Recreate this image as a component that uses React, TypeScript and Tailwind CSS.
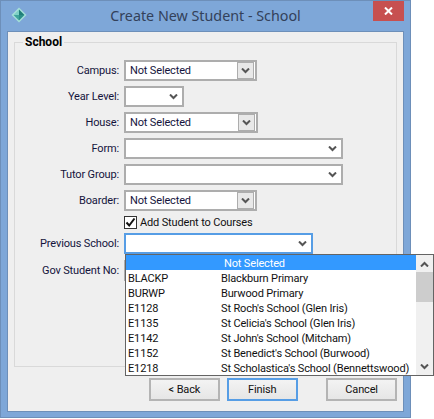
import React from "react";

const ui = "font-['Roboto',Arial,sans-serif]";

function Chevron({ className = "" }: { className?: string }) {
  return (
    <svg width="9" height="6" viewBox="0 0 9 6" className={className}>
      <path d="M1 0.5L4.5 4L8 0.5" fill="none" stroke="#555" strokeWidth="2" />
    </svg>
  );
}

function Row({ label, children }: { label: string; children?: React.ReactNode }) {
  return (
    <div className="flex h-[21px] items-center">
      <label className="w-[105px] pr-[5px] pt-[2px] text-right">{label}</label>
      {children}
    </div>
  );
}

// read-only combo with the raised square button
function SelectBox({ value, width }: { value: string; width: string }) {
  return (
    <div className={`flex h-[21px] items-center justify-between border-2 border-[#adadad] bg-white pl-[4px] ${width}`}>
      <span className="pt-[2px]">{value}</span>
      <span className="mr-px flex h-[17px] w-[17px] items-center justify-center border border-[#adadad] bg-[#e8e8e8]">
        <Chevron />
      </span>
    </div>
  );
}

// editable combo, flat arrow
function ComboBox({ width, focused }: { width: string; focused?: boolean }) {
  return (
    <div className={`flex h-[21px] items-center justify-end border-2 bg-white pr-[4px] ${width} ${focused ? "border-[#569de5]" : "border-[#adadad]"}`}>
      <Chevron />
    </div>
  );
}

const schools = [
  ["BLACKP", "Blackburn Primary"],
  ["BURWP", "Burwood Primary"],
  ["E1128", "St Roch's School (Glen Iris)"],
  ["E1135", "St Celicia's School (Glen Iris)"],
  ["E1142", "St John's School (Mitcham)"],
  ["E1152", "St Benedict's School (Burwood)"],
  ["E1218", "St Scholastica's School (Bennettswood)"],
];

function Dropdown() {
  return (
    <div className="absolute left-[125px] top-[254px] flex h-[122px] w-[309px] border border-[#646464] bg-white">
      <div className="flex-1">
        <div className="flex h-[15px] items-center bg-[#3399ff] pl-[98px] pt-px leading-none text-white">Not Selected</div>
        {schools.map(([code, name]) => (
          <div key={code} className="flex h-[15px] items-center whitespace-nowrap pt-px leading-none text-[#111]">
            <span className="w-[95px] pl-[2px]">{code}</span>
            <span>{name}</span>
          </div>
        ))}
      </div>
      <div className="flex w-[17px] flex-col items-center bg-[#f0f0f0]">
        <div className="flex h-[17px] items-center justify-center">
          <Chevron className="rotate-180" />
        </div>
        <div className="h-[30px] w-full bg-[#cdcdcd]" />
        <div className="flex-1" />
        <div className="flex h-[17px] items-center justify-center">
          <Chevron />
        </div>
      </div>
    </div>
  );
}

function Button({ label, primary }: { label: string; primary?: boolean }) {
  return (
    <button className={`h-[23px] w-[73px] border-2 bg-[linear-gradient(#f3f3f3,#e6e6e6)] pt-px text-[#111] ${primary ? "border-[#569de5]" : "border-[#b4b4b4]"}`}>
      {label}
    </button>
  );
}

export default function App() {
  return (
    <div className={`relative h-[419px] w-[434px] overflow-hidden bg-white text-[11px] tracking-[-0.15px] text-[#14143c] ${ui}`}>
      <div className="flex h-[418px] w-[411px] flex-col border border-[#6d8fb9] bg-[#7ea7d8]">
        {/* Title bar */}
        <div className="relative flex h-[30px] items-center justify-center">
          <svg width="16" height="16" viewBox="0 0 16 16" className="absolute left-[10px] top-[6px]">
            <path d="M8 0.5L15.5 8L8 15.5L0.5 8Z" fill="#a6e0d8" />
            <path d="M8 2.5L13.5 8H8Z" fill="#1f7f78" />
            <path d="M2.5 8H8V13.5Z" fill="#3fa59c" />
            <path d="M8 8H13.5L8 13.5Z" fill="#2b8f88" />
            <path d="M8 2.5V8H2.5Z" fill="#7fd0c6" />
          </svg>
          <span className="font-['Noto_Sans',sans-serif] text-[14.3px] tracking-normal text-[#33415a]">Create New Student - School</span>
          <div className="absolute right-[6px] top-0 flex h-[20px] w-[31px] items-center justify-center bg-[#c75050]">
            <svg width="9" height="8" viewBox="0 0 9 8">
              <path d="M1 0.5L8 7.5M8 0.5L1 7.5" stroke="#fff" strokeWidth="2" />
            </svg>
          </div>
        </div>

        {/* Client area */}
        <div className="mx-[6px] flex h-[381px] flex-col border border-[#6d8fb9] bg-[#efefef] px-[6px]">
          <fieldset className="mt-[3px] h-[332px] border border-[#d9d9d9] px-0 pt-[11px]">
            <legend className="ml-[8px] px-[2px] text-[12px] font-bold leading-[14px] tracking-normal text-black">School</legend>
            <div className="flex flex-col gap-[5px] pl-[4px]">
              <Row label="Campus:"><SelectBox value="Not Selected" width="w-[133px]" /></Row>
              <Row label="Year Level:"><ComboBox width="w-[60px]" /></Row>
              <Row label="House:"><SelectBox value="Not Selected" width="w-[134px]" /></Row>
              <Row label="Form:"><ComboBox width="w-[219px]" /></Row>
              <Row label="Tutor Group:"><ComboBox width="w-[219px]" /></Row>
              <Row label="Boarder:"><SelectBox value="Not Selected" width="w-[133px]" /></Row>
            </div>
            <div className="mt-[5px] flex h-[13px] items-center gap-[3px] pl-[109px] text-[#111]">
              <span className="flex h-[13px] w-[13px] items-center justify-center border border-[#333] bg-white">
                <svg width="11" height="11" viewBox="0 0 11 11">
                  <path d="M1.5 5.5L4.2 8.5L9.5 1.5" fill="none" stroke="#111" strokeWidth="2" />
                </svg>
              </span>
              <span className="pt-px">Add Student to Courses</span>
            </div>
            <div className="mt-[4px] flex flex-col gap-[6px] pl-[4px]">
              <Row label="Previous School:"><ComboBox width="w-[189px]" focused /></Row>
              <Row label="Gov Student No:"><div className="h-[21px] w-[100px] border-2 border-[#adadad] bg-white" /></Row>
            </div>
          </fieldset>
          <div className="mt-[11px] flex gap-[7px] pl-[135px]">
            <Button label="< Back" />
            <Button label="Finish" primary />
            <div className="w-[15px]" />
            <Button label="Cancel" />
          </div>
        </div>
      </div>
      <Dropdown />
    </div>
  );
}
